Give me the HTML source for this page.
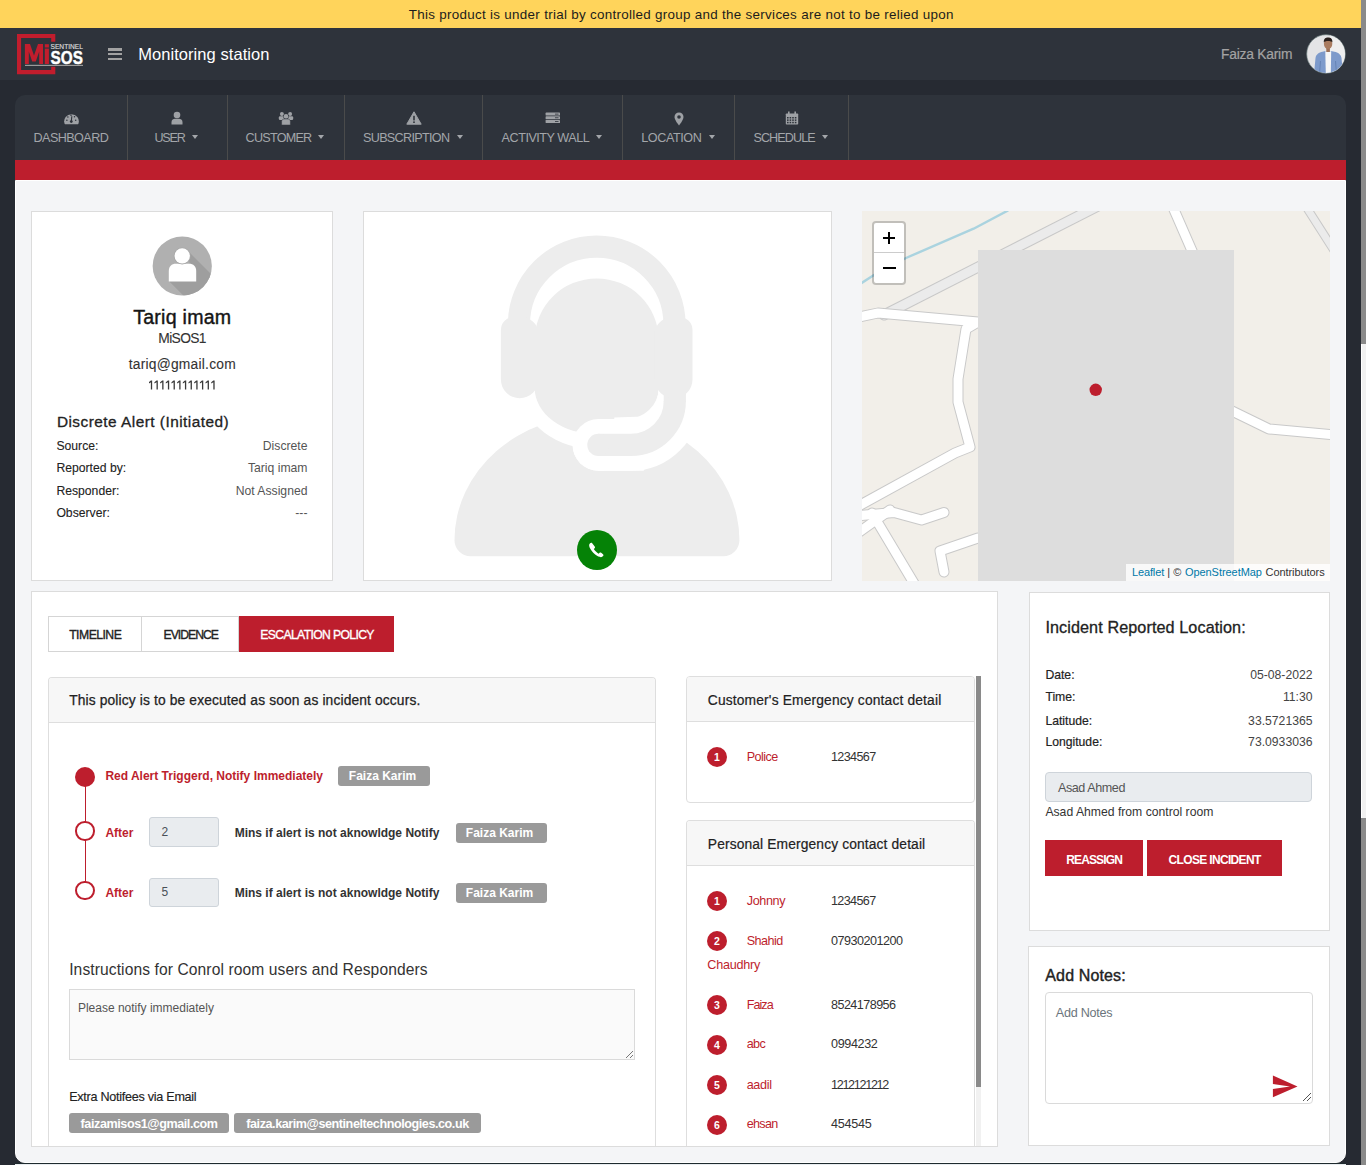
<!DOCTYPE html>
<html><head><meta charset="utf-8"><style>
html,body{margin:0;padding:0;width:1368px;height:1165px;overflow:hidden;background:#262a32;font-family:"Liberation Sans",sans-serif}
body{position:relative}
</style></head><body>
<div style="position:absolute;left:0px;top:0px;width:1368px;height:28px;background:#ffd45b"></div>
<div style="position:absolute;left:0px;top:28px;width:1361px;height:52px;background:#2e333b"></div>
<div style="position:absolute;left:0px;top:80px;width:1361px;height:1085px;background:#262a32"></div>
<div style="position:absolute;left:15px;top:1163px;width:1331px;height:1px;background:#1e2a2e"></div>
<div style="position:absolute;left:1361px;top:0px;width:7px;height:1165px;background:#fff"></div>
<div style="position:absolute;left:1361px;top:0px;width:5px;height:344px;background:#8a8a8a"></div>
<div style="position:absolute;left:1362px;top:344px;width:4px;height:474px;background:#f1f1f1"></div>
<div style="position:absolute;left:1361px;top:818px;width:5px;height:347px;background:#8a8a8a"></div>
<svg style="position:absolute;left:0;top:0" width="100" height="80">
<path d="M55.3 41.7V34H17v40.2h38.3v-7.4h-4.1v3.3H21.1V38.1h30.1v3.6z" fill="#c21d2d"/>
<path d="M24.9 64 V44 H30 L34 55.5 L38 44 H43 V64 H39.2 V51.5 L35.8 61.5 H32.2 L28.8 51.5 V64 Z" fill="#c21d2d"/>
<rect x="44.8" y="48.6" width="4.1" height="15.4" fill="#c21d2d"/><rect x="44.8" y="44.2" width="4.1" height="3.3" fill="#c21d2d"/>
<text x="50.6" y="64" font-family="Liberation Sans" font-weight="700" font-size="19" fill="#fff" stroke="#fff" stroke-width="0.4" textLength="32.3" lengthAdjust="spacingAndGlyphs">SOS</text>
<text x="50.5" y="49.2" font-family="Liberation Sans" font-weight="400" font-size="6.9" fill="#dcdcdc" stroke="#dcdcdc" stroke-width="0.15" textLength="32.5" lengthAdjust="spacingAndGlyphs">SENTINEL</text>
<rect x="25" y="64.8" width="58" height="1.2" fill="#9a9a9a"/>
</svg>
<div style="position:absolute;left:107.5px;top:48px;width:14.5px;height:2.6px;background:#a2a2a2"></div>
<div style="position:absolute;left:107.5px;top:52.8px;width:14.5px;height:2.6px;background:#a2a2a2"></div>
<div style="position:absolute;left:107.5px;top:57.5px;width:14.5px;height:2.6px;background:#a2a2a2"></div>
<svg style="position:absolute;left:1306px;top:34px" width="40" height="40" viewBox="0 0 40 40">
<defs><clipPath id="av"><circle cx="20" cy="20" r="19"/></clipPath></defs>
<circle cx="20" cy="20" r="19.3" fill="#e4e4e6" stroke="#6f7f7f" stroke-width="0.7"/>
<g clip-path="url(#av)">
<rect x="24" y="0" width="16" height="40" fill="#eeeeef"/>
<path d="M8 40 L9.5 24 C10 20.5 13 18.5 16.5 17.8 L19.5 17 L25 17 L28.5 17.8 C32 18.5 35 20.5 35.5 24 L37 40Z" fill="#7d9acb"/>
<path d="M19.3 17.2 L25.2 17.2 L24.8 40 L19.8 40Z" fill="#f6f6f6"/>
<rect x="20.3" y="12.5" width="3.6" height="5.5" fill="#9c7058"/>
<ellipse cx="22.1" cy="9.8" rx="4.2" ry="5.3" fill="#a97b60"/>
<path d="M17.8 8.6 C17.6 4.6 19.6 3.6 22.1 3.6 C24.6 3.6 26.6 4.6 26.4 8.6 C25.6 6.6 18.6 6.6 17.8 8.6Z" fill="#2a201d"/>
<path d="M13.5 40 L14.5 27 M30.5 40 L29.5 27" stroke="#5f7db0" stroke-width="0.8"/>
</g></svg>
<div style="position:absolute;left:15px;top:95px;width:1331px;height:65px;background:#2e333b;border-radius:10px 10px 0 0"></div>
<div style="position:absolute;left:127px;top:95px;width:1px;height:65px;background:#4a4b4b"></div>
<div style="position:absolute;left:227px;top:95px;width:1px;height:65px;background:#4a4b4b"></div>
<div style="position:absolute;left:344px;top:95px;width:1px;height:65px;background:#4a4b4b"></div>
<div style="position:absolute;left:482px;top:95px;width:1px;height:65px;background:#4a4b4b"></div>
<div style="position:absolute;left:622px;top:95px;width:1px;height:65px;background:#4a4b4b"></div>
<div style="position:absolute;left:734px;top:95px;width:1px;height:65px;background:#4a4b4b"></div>
<div style="position:absolute;left:848px;top:95px;width:1px;height:65px;background:#4a4b4b"></div>
<div style="position:absolute;left:15px;top:160px;width:1331px;height:20px;background:#bd1e2d"></div>
<div style="position:absolute;left:192.4px;top:134.5px;width:0;height:0;border-left:3.7px solid transparent;border-right:3.7px solid transparent;border-top:4.2px solid #a3a6aa"></div>
<div style="position:absolute;left:318.1px;top:134.5px;width:0;height:0;border-left:3.7px solid transparent;border-right:3.7px solid transparent;border-top:4.2px solid #a3a6aa"></div>
<div style="position:absolute;left:456.7px;top:134.5px;width:0;height:0;border-left:3.7px solid transparent;border-right:3.7px solid transparent;border-top:4.2px solid #a3a6aa"></div>
<div style="position:absolute;left:596.3px;top:134.5px;width:0;height:0;border-left:3.7px solid transparent;border-right:3.7px solid transparent;border-top:4.2px solid #a3a6aa"></div>
<div style="position:absolute;left:708.7px;top:134.5px;width:0;height:0;border-left:3.7px solid transparent;border-right:3.7px solid transparent;border-top:4.2px solid #a3a6aa"></div>
<div style="position:absolute;left:822.0px;top:134.5px;width:0;height:0;border-left:3.7px solid transparent;border-right:3.7px solid transparent;border-top:4.2px solid #a3a6aa"></div>
<svg style="position:absolute;left:63.5px;top:112px" width="15" height="13" viewBox="0 0 15 13"><path d="M0.5 11.5 A7.3 7.3 0 1 1 14.5 11.5 L14 12.2 H1 Z" fill="#9ea1a5"/><circle cx="7.3" cy="9.6" r="1.4" fill="#2e333b"/><path d="M7.3 9.6 L7.8 4.3" stroke="#2e333b" stroke-width="1.1"/><circle cx="2.9" cy="8.2" r="0.75" fill="#2e333b"/><circle cx="3.9" cy="5" r="0.75" fill="#2e333b"/><circle cx="7" cy="3.3" r="0.75" fill="#2e333b"/><circle cx="10.5" cy="4.8" r="0.75" fill="#2e333b"/><circle cx="11.7" cy="8.2" r="0.75" fill="#2e333b"/></svg>
<svg style="position:absolute;left:168.8px;top:111px" width="16" height="14" viewBox="0 0 16 14"><circle cx="8" cy="4" r="3.3" fill="#9ea1a5"/><path d="M2.5 13.5 V11 C2.5 8.5 4.5 7.8 6 7.8 H10 C11.5 7.8 13.5 8.5 13.5 11 V13.5Z" fill="#9ea1a5"/></svg>
<svg style="position:absolute;left:277.5px;top:111px" width="16" height="14" viewBox="0 0 16 14"><circle cx="3.9" cy="2.9" r="2" fill="#9ea1a5"/><circle cx="12.1" cy="2.9" r="2" fill="#9ea1a5"/><rect x="0.8" y="5.3" width="5.5" height="3.6" rx="1.2" fill="#9ea1a5"/><rect x="9.7" y="5.3" width="5.5" height="3.6" rx="1.2" fill="#9ea1a5"/><circle cx="8" cy="5.4" r="2.7" fill="#2e333b"/><circle cx="8" cy="5.4" r="2.3" fill="#9ea1a5"/><path d="M3.6 14 V10.6 C3.6 8.9 4.8 8 6.3 8 H9.7 C11.2 8 12.4 8.9 12.4 10.6 V14Z" fill="#9ea1a5" stroke="#2e333b" stroke-width="0.5"/></svg>
<svg style="position:absolute;left:406.0px;top:111px" width="16" height="14" viewBox="0 0 16 14"><path d="M8 0.8 L15.2 13.2 H0.8Z" fill="#9ea1a5" stroke="#9ea1a5" stroke-linejoin="round" stroke-width="1"/><rect x="7.2" y="4.8" width="1.6" height="4.6" fill="#2e333b"/><rect x="7.2" y="10.4" width="1.6" height="1.6" fill="#2e333b"/></svg>
<svg style="position:absolute;left:545.2px;top:111px" width="16" height="14" viewBox="0 0 16 14"><rect x="0.6" y="1.6" width="14.4" height="3" rx="0.6" fill="#9ea1a5"/><rect x="0.6" y="5.3" width="14.4" height="3" rx="0.6" fill="#9ea1a5"/><rect x="0.6" y="9" width="14.4" height="3" rx="0.6" fill="#9ea1a5"/><rect x="10" y="2.7" width="3.5" height="0.8" fill="#2e333b"/><rect x="10" y="6.4" width="3.5" height="0.8" fill="#2e333b"/><rect x="10" y="10.1" width="3.5" height="0.8" fill="#2e333b"/></svg>
<svg style="position:absolute;left:673.9px;top:112px" width="10" height="14" viewBox="0 0 10 14"><path d="M5 0.5 C2.3 0.5 0.5 2.5 0.5 5 C0.5 8 5 13.5 5 13.5 C5 13.5 9.5 8 9.5 5 C9.5 2.5 7.7 0.5 5 0.5Z" fill="#9ea1a5"/><circle cx="5" cy="5" r="1.8" fill="#2e333b"/></svg>
<svg style="position:absolute;left:784.6px;top:111px" width="14" height="14" viewBox="0 0 14 14"><rect x="0.8" y="2.5" width="12.4" height="11" rx="0.8" fill="#9ea1a5"/><rect x="3" y="0.5" width="1.6" height="3" fill="#9ea1a5"/><rect x="9.4" y="0.5" width="1.6" height="3" fill="#9ea1a5"/><rect x="2.0" y="6.0" width="1.6" height="1.5" fill="#2e333b"/><rect x="2.0" y="8.4" width="1.6" height="1.5" fill="#2e333b"/><rect x="2.0" y="10.8" width="1.6" height="1.5" fill="#2e333b"/><rect x="4.6" y="6.0" width="1.6" height="1.5" fill="#2e333b"/><rect x="4.6" y="8.4" width="1.6" height="1.5" fill="#2e333b"/><rect x="4.6" y="10.8" width="1.6" height="1.5" fill="#2e333b"/><rect x="7.2" y="6.0" width="1.6" height="1.5" fill="#2e333b"/><rect x="7.2" y="8.4" width="1.6" height="1.5" fill="#2e333b"/><rect x="7.2" y="10.8" width="1.6" height="1.5" fill="#2e333b"/><rect x="9.8" y="6.0" width="1.6" height="1.5" fill="#2e333b"/><rect x="9.8" y="8.4" width="1.6" height="1.5" fill="#2e333b"/><rect x="9.8" y="10.8" width="1.6" height="1.5" fill="#2e333b"/></svg>
<div style="position:absolute;left:15px;top:180px;width:1331px;height:983px;background:#f4f5f7;border-left:1px solid #fff;border-top:1px solid #fff;border-right:1px solid #fff;border-bottom:1px solid #fff;box-sizing:border-box;border-radius:0 0 10px 10px"></div>
<div style="position:absolute;left:15px;top:1164px;width:1331px;height:1px;background:#e9edf0"></div>
<div style="position:absolute;left:31px;top:211px;width:302px;height:370px;background:#fff;border:1px solid #dcdcdc;box-sizing:border-box"></div>
<svg style="position:absolute;left:152px;top:236px" width="60" height="60" viewBox="0 0 60 60">
<defs><clipPath id="pc"><circle cx="30.25" cy="30" r="29.6"/></clipPath></defs>
<circle cx="30.25" cy="30" r="29.6" fill="#b0b0b0"/>
<g clip-path="url(#pc)"><path d="M35.6 14.6 L80 59 L57.5 85.6 L17.3 45.4 L38 30Z" fill="#9e9e9e"/></g>
<path d="M16.8 45.6 V35 C16.8 30.5 19.5 27.8 24 27.8 H37 C41.5 27.8 44.2 30.5 44.2 35 V45.6Z" fill="#fff"/>
<circle cx="30.2" cy="19.9" r="8.5" fill="#a8a8a8"/>
<circle cx="30.2" cy="19.9" r="7.66" fill="#fff"/>
</svg>
<svg style="position:absolute;left:149px;top:380px" width="67" height="10"><path d="M1.85 9.6 V0.6 H3.15 V9.6Z M1.85 0.6 L-0.25 2.3 V3.6 L1.85 2.2Z" fill="#3a3a3a"/><path d="M7.53 9.6 V0.6 H8.83 V9.6Z M7.53 0.6 L5.43 2.3 V3.6 L7.53 2.2Z" fill="#3a3a3a"/><path d="M13.21 9.6 V0.6 H14.51 V9.6Z M13.21 0.6 L11.11 2.3 V3.6 L13.21 2.2Z" fill="#3a3a3a"/><path d="M18.89 9.6 V0.6 H20.19 V9.6Z M18.89 0.6 L16.79 2.3 V3.6 L18.89 2.2Z" fill="#3a3a3a"/><path d="M24.57 9.6 V0.6 H25.87 V9.6Z M24.57 0.6 L22.47 2.3 V3.6 L24.57 2.2Z" fill="#3a3a3a"/><path d="M30.25 9.6 V0.6 H31.55 V9.6Z M30.25 0.6 L28.15 2.3 V3.6 L30.25 2.2Z" fill="#3a3a3a"/><path d="M35.93 9.6 V0.6 H37.23 V9.6Z M35.93 0.6 L33.83 2.3 V3.6 L35.93 2.2Z" fill="#3a3a3a"/><path d="M41.61 9.6 V0.6 H42.91 V9.6Z M41.61 0.6 L39.51 2.3 V3.6 L41.61 2.2Z" fill="#3a3a3a"/><path d="M47.29 9.6 V0.6 H48.59 V9.6Z M47.29 0.6 L45.19 2.3 V3.6 L47.29 2.2Z" fill="#3a3a3a"/><path d="M52.97 9.6 V0.6 H54.27 V9.6Z M52.97 0.6 L50.87 2.3 V3.6 L52.97 2.2Z" fill="#3a3a3a"/><path d="M58.65 9.6 V0.6 H59.95 V9.6Z M58.65 0.6 L56.55 2.3 V3.6 L58.65 2.2Z" fill="#3a3a3a"/><path d="M64.33 9.6 V0.6 H65.63 V9.6Z M64.33 0.6 L62.23 2.3 V3.6 L64.33 2.2Z" fill="#3a3a3a"/></svg>
<div style="position:absolute;left:363px;top:211px;width:469px;height:370px;background:#fff;border:1px solid #dcdcdc;box-sizing:border-box"></div>
<svg style="position:absolute;left:0;top:0;pointer-events:none" width="1368" height="600">
<path d="M454.5 540 A142.45 125.4 0 0 1 739.4 540 V540.2 A16 16 0 0 1 723.4 556.2 H470.5 A16 16 0 0 1 454.5 540.2Z" fill="#ededed"/>
<path d="M534.7 340 A62 61.6 0 0 1 658.7 340 V388 A62 46.4 0 0 1 534.7 388 Z" fill="#fff" stroke="#fff" stroke-width="29"/>
<path d="M674.8 401 A43.9 43.9 0 0 1 630.9 444.9 H598.4" fill="none" stroke="#fff" stroke-width="51.6"/><circle cx="598.4" cy="444.9" r="25.8" fill="#fff"/>
<path d="M534.7 340 A62 61.6 0 0 1 658.7 340 V388 A62 46.4 0 0 1 534.7 388 Z" fill="#ededed"/>
<path d="M658.7 386 V388 A33 31.1 0 0 1 625.7 419.1 L 700 419.1 L 700 386 Z" fill="#fff"/>
<path d="M640.1 416.6 A43.9 43.9 0 0 1 630.9 444.9 H598.4" fill="none" stroke="#fff" stroke-width="51.6"/><circle cx="598.4" cy="444.9" r="25.8" fill="#fff"/>
<path d="M674.8 401 A43.9 43.9 0 0 1 630.9 444.9 H598.4" fill="none" stroke="#ededed" stroke-width="22.2"/><circle cx="598.4" cy="444.9" r="11.1" fill="#ededed"/>
<path d="M674.8 380 V402" fill="none" stroke="#ededed" stroke-width="22.2"/>
<path d="M518.9 324.4 A77.8 77.8 0 0 1 674.5 324.4" fill="none" stroke="#ededed" stroke-width="22.2"/>
<path d="M500.9 330 A13 13 0 0 1 513.9 317 H521 A18 18 0 0 1 538.5 331 V379.5 A18 18 0 0 1 500.9 379.5 Z" fill="#ededed"/>
<path d="M692.5 330 A13 13 0 0 0 679.5 317 H672.4 A18 18 0 0 0 654.9 331 V379.5 A18 18 0 0 0 692.5 379.5 Z" fill="#ededed"/>
</svg>
<svg style="position:absolute;left:577px;top:530px" width="40" height="40" viewBox="0 0 40 40">
<circle cx="20" cy="20" r="20" fill="#058206"/>
<path d="M15.2 13.2 C14.6 12.6 13.6 12.7 13.1 13.3 L12.5 14 C11.9 14.8 12 16.5 13.3 18.8 C14.8 21.4 17.3 24.3 20.4 26 C22.8 27.3 24.3 27.5 25.2 26.8 L26 26.1 C26.6 25.6 26.6 24.7 26 24.2 L24.2 22.8 C23.6 22.4 22.9 22.5 22.4 23 L21.6 23.8 C20 23 17.6 20.6 16.8 19.1 L17.6 18.3 C18.1 17.8 18.1 17 17.7 16.4Z" fill="#fff"/>
</svg>
<div style="position:absolute;left:862px;top:211px;width:468px;height:370px;overflow:hidden;background:#f2efe9">
<svg style="position:absolute;left:0;top:0" width="468" height="370" viewBox="862 211 468 370">
<g fill="none" stroke-linejoin="round" stroke-linecap="round">
<path d="M884 315 L1100 205" stroke="#c8c8c8" stroke-width="11"/>
<path d="M884 315 L1100 205" stroke="#ebebeb" stroke-width="9"/>
<path d="M1305 205 L1335 252" stroke="#c8c8c8" stroke-width="9"/>
<path d="M1305 205 L1335 252" stroke="#ebebeb" stroke-width="7"/>
<path d="M860 284 L874 275 L906 258 L973.6 228.7 L1007.6 210.7" stroke="#aad3df" stroke-width="2.4"/>
<g stroke="#c9c9c9" stroke-width="11">
<path d="M855 318 L878 313 L978 322 L966 329 L958 379 L958 402 L970 447 L955 453 L855 508"/>
<path d="M855 516 L894 512.5 L921.5 520 L944 512.5"/>
<path d="M855 535 L890 510"/>
<path d="M872 513 L918 590"/>
<path d="M944 572 L940 551 L978 538"/>
<path d="M1172 205 L1196 260"/>
<path d="M1230 410 L1269 429 L1335 435"/>
</g>
<g stroke="#ffffff" stroke-width="9">
<path d="M855 318 L878 313 L978 322 L966 329 L958 379 L958 402 L970 447 L955 453 L855 508"/>
<path d="M855 516 L894 512.5 L921.5 520 L944 512.5"/>
<path d="M855 535 L890 510"/>
<path d="M872 513 L918 590"/>
<path d="M944 572 L940 551 L978 538"/>
<path d="M1172 205 L1196 260"/>
<path d="M1230 410 L1269 429 L1335 435"/>
</g></g>
<rect x="978" y="250" width="256" height="340" fill="#dddddd"/>
<circle cx="1095.7" cy="389.8" r="6.2" fill="#bd1e2d"/>
</svg>
<div style="position:absolute;left:10px;top:10px;width:30px;height:60px;border:2px solid rgba(0,0,0,0.2);border-radius:4px;background:#fff;background-clip:padding-box"></div>
<div style="position:absolute;left:12px;top:40.6px;width:30px;height:1px;background:#ccc"></div>
<div style="position:absolute;left:864px;top:563px"></div>
<div style="position:absolute;left:264px;top:352.5px;width:204px;height:18px;background:rgba(255,255,255,0.8)"></div>
</div>
<div style="position:absolute;left:882.6px;top:237px;width:12.4px;height:2.3px;background:#000"></div>
<div style="position:absolute;left:887.7px;top:232px;width:2.2px;height:12.2px;background:#000"></div>
<div style="position:absolute;left:883.3px;top:266.8px;width:12.5px;height:2.4px;background:#000"></div>
<div style="position:absolute;left:31px;top:591px;width:967px;height:556px;background:#fff;border:1px solid #dcdcdc;box-sizing:border-box;overflow:hidden"></div>
<div style="position:absolute;left:48px;top:616px;width:94px;height:36px;border:1px solid #d5d5d5;box-sizing:border-box;background:#fff"></div>
<div style="position:absolute;left:141px;top:616px;width:98px;height:36px;border:1px solid #d5d5d5;box-sizing:border-box;background:#fff"></div>
<div style="position:absolute;left:238.6px;top:616px;width:155.4px;height:36px;background:#bd1e2d"></div>
<div style="position:absolute;left:48px;top:677px;width:608px;height:469px;border:1px solid #dedede;border-bottom:none;border-radius:4px 4px 0 0;box-sizing:border-box;background:#fff"></div>
<div style="position:absolute;left:49px;top:678px;width:606px;height:45px;background:#f7f7f7;border-bottom:1px solid #dedede;border-radius:3px 3px 0 0;box-sizing:border-box"></div>
<div style="position:absolute;left:84.6px;top:786px;width:1.2px;height:105px;background:#bd1e2d"></div>
<div style="position:absolute;left:75px;top:767px;width:20px;height:20px;border-radius:50%;background:#bd1e2d"></div>
<div style="position:absolute;left:75.3px;top:821.3px;width:19.4px;height:19.4px;border-radius:50%;background:#fff;border:2px solid #bd1e2d;box-sizing:border-box"></div>
<div style="position:absolute;left:75.3px;top:881.0999999999999px;width:19.4px;height:19.4px;border-radius:50%;background:#fff;border:2px solid #bd1e2d;box-sizing:border-box"></div>
<div style="position:absolute;left:338.4px;top:766.1px;width:91.6px;height:19.8px;background:#9a9a9a;border-radius:3px"></div>
<div style="position:absolute;left:148.8px;top:817.2px;width:70px;height:29.5px;background:#e9ecef;border:1px solid #ced4da;border-radius:3px;box-sizing:border-box"></div>
<div style="position:absolute;left:455.7px;top:823.0px;width:91.2px;height:19.8px;background:#9a9a9a;border-radius:3px"></div>
<div style="position:absolute;left:148.8px;top:877.6px;width:70px;height:29.5px;background:#e9ecef;border:1px solid #ced4da;border-radius:3px;box-sizing:border-box"></div>
<div style="position:absolute;left:455.7px;top:883.4px;width:91.2px;height:19.8px;background:#9a9a9a;border-radius:3px"></div>
<div style="position:absolute;left:69.2px;top:989.3px;width:566px;height:71px;background:#fafafa;border:1px solid #dadada;box-sizing:border-box"></div>
<svg style="position:absolute;left:624px;top:1049px" width="10" height="10"><path d="M9 2 L2 9 M9 6 L6 9" stroke="#777" stroke-width="1"/></svg>
<div style="position:absolute;left:69.2px;top:1113.3px;width:159.8px;height:19.3px;background:#9a9a9a;border-radius:3px"></div>
<div style="position:absolute;left:234.3px;top:1113.3px;width:246.4px;height:19.3px;background:#9a9a9a;border-radius:3px"></div>
<div style="position:absolute;left:686.4px;top:676.4px;width:289px;height:127px;border:1px solid #dedede;border-radius:4px;box-sizing:border-box;background:#fff"></div>
<div style="position:absolute;left:687.4px;top:677.4px;width:287px;height:45px;background:#f7f7f7;border-bottom:1px solid #dedede;border-radius:3px 3px 0 0;box-sizing:border-box"></div>
<div style="position:absolute;left:686.4px;top:820.3px;width:289px;height:325.7px;border:1px solid #dedede;border-bottom:none;border-radius:4px 4px 0 0;box-sizing:border-box;background:#fff"></div>
<div style="position:absolute;left:687.4px;top:821.3px;width:287px;height:45px;background:#f7f7f7;border-bottom:1px solid #dedede;border-radius:3px 3px 0 0;box-sizing:border-box"></div>
<div style="position:absolute;left:976px;top:676.4px;width:5px;height:469.6px;background:#f1f1f1"></div>
<div style="position:absolute;left:976px;top:676.4px;width:5px;height:411px;background:#8a8a8a"></div>
<div style="position:absolute;left:707px;top:746.9px;width:20px;height:20px;border-radius:50%;background:#bd1e2d"></div>
<div style="position:absolute;left:707px;top:891.1px;width:20px;height:20px;border-radius:50%;background:#bd1e2d"></div>
<div style="position:absolute;left:707px;top:930.9px;width:20px;height:20px;border-radius:50%;background:#bd1e2d"></div>
<div style="position:absolute;left:707px;top:995px;width:20px;height:20px;border-radius:50%;background:#bd1e2d"></div>
<div style="position:absolute;left:707px;top:1034.8px;width:20px;height:20px;border-radius:50%;background:#bd1e2d"></div>
<div style="position:absolute;left:707px;top:1075px;width:20px;height:20px;border-radius:50%;background:#bd1e2d"></div>
<div style="position:absolute;left:707px;top:1114.8px;width:20px;height:20px;border-radius:50%;background:#bd1e2d"></div>
<div style="position:absolute;left:1028.5px;top:591.5px;width:301.5px;height:339px;background:#fff;border:1px solid #dcdcdc;box-sizing:border-box"></div>
<div style="position:absolute;left:1045.4px;top:772.3px;width:267.1px;height:29.5px;background:#e9ecef;border:1px solid #ced4da;border-radius:4px;box-sizing:border-box"></div>
<div style="position:absolute;left:1045.4px;top:839.9px;width:97.4px;height:36.1px;background:#bd1e2d"></div>
<div style="position:absolute;left:1147.3px;top:839.9px;width:134.6px;height:36.1px;background:#bd1e2d"></div>
<div style="position:absolute;left:1028.3px;top:946.2px;width:301.5px;height:199.7px;background:#fff;border:1px solid #dcdcdc;box-sizing:border-box"></div>
<div style="position:absolute;left:1045.3px;top:992.3px;width:267.7px;height:112.2px;background:#fff;border:1px solid #dadada;border-radius:4px;box-sizing:border-box"></div>
<svg style="position:absolute;left:1272px;top:1075px" width="27" height="23"><path d="M0.9 0.5 L25.5 11.4 L0.9 22.2 V14.1 L18 11.4 L0.9 8.9Z" fill="#bd1e2d"/></svg>
<svg style="position:absolute;left:1302px;top:1092px" width="10" height="10"><path d="M9 1 L1 9 M9 5 L5 9" stroke="#555" stroke-width="1"/></svg>
<span id="t0" style="position:absolute;white-space:nowrap;font-family:'Liberation Sans';font-size:13.4px;font-weight:400;color:#1c1c1c;line-height:13.4px;letter-spacing:0.299px;left:408.8px;top:8.26px;">This product is under trial by controlled group and the services are not to be relied upon</span>
<span id="t1" style="position:absolute;white-space:nowrap;font-family:'Liberation Sans';font-size:16.5px;font-weight:400;color:#ffffff;line-height:16.5px;letter-spacing:0.058px;left:138.2px;top:46.03px;">Monitoring station</span>
<span id="t2" style="position:absolute;white-space:nowrap;font-family:'Liberation Sans';font-size:13.8px;font-weight:400;color:#a3a3a3;line-height:13.8px;letter-spacing:-0.219px;left:1292.2px;top:47.62px;transform:translateX(-100%);-webkit-text-stroke:0.2px #a3a3a3;">Faiza Karim</span>
<span id="t3" style="position:absolute;white-space:nowrap;font-family:'Liberation Sans';font-size:12.6px;font-weight:400;color:#a3a6aa;line-height:12.6px;letter-spacing:-0.576px;left:33.6px;top:131.73px;">DASHBOARD</span>
<span id="t4" style="position:absolute;white-space:nowrap;font-family:'Liberation Sans';font-size:12.6px;font-weight:400;color:#a3a6aa;line-height:12.6px;letter-spacing:-1.150px;left:154.4px;top:131.73px;">USER</span>
<span id="t5" style="position:absolute;white-space:nowrap;font-family:'Liberation Sans';font-size:12.6px;font-weight:400;color:#a3a6aa;line-height:12.6px;letter-spacing:-0.755px;left:245.6px;top:131.73px;">CUSTOMER</span>
<span id="t6" style="position:absolute;white-space:nowrap;font-family:'Liberation Sans';font-size:12.6px;font-weight:400;color:#a3a6aa;line-height:12.6px;letter-spacing:-0.681px;left:363.0px;top:131.73px;">SUBSCRIPTION</span>
<span id="t7" style="position:absolute;white-space:nowrap;font-family:'Liberation Sans';font-size:12.6px;font-weight:400;color:#a3a6aa;line-height:12.6px;letter-spacing:-0.468px;left:501.6px;top:131.73px;">ACTIVITY WALL</span>
<span id="t8" style="position:absolute;white-space:nowrap;font-family:'Liberation Sans';font-size:12.6px;font-weight:400;color:#a3a6aa;line-height:12.6px;letter-spacing:-0.394px;left:641.2px;top:131.73px;">LOCATION</span>
<span id="t9" style="position:absolute;white-space:nowrap;font-family:'Liberation Sans';font-size:12.6px;font-weight:400;color:#a3a6aa;line-height:12.6px;letter-spacing:-0.899px;left:753.4px;top:131.73px;">SCHEDULE</span>
<span id="t10" style="position:absolute;white-space:nowrap;font-family:'Liberation Sans';font-size:19.6px;font-weight:400;color:#151515;line-height:19.6px;letter-spacing:0.249px;left:182.3px;top:308.01px;transform:translateX(-50%);-webkit-text-stroke:0.4px #151515;">Tariq imam</span>
<span id="t11" style="position:absolute;white-space:nowrap;font-family:'Liberation Sans';font-size:13.8px;font-weight:400;color:#333;line-height:13.8px;letter-spacing:-0.646px;left:182.1px;top:332.32px;transform:translateX(-50%);-webkit-text-stroke:0.1px #333;">MiSOS1</span>
<span id="t12" style="position:absolute;white-space:nowrap;font-family:'Liberation Sans';font-size:13.8px;font-weight:400;color:#333;line-height:13.8px;letter-spacing:0.239px;left:182.3px;top:357.52px;transform:translateX(-50%);-webkit-text-stroke:0.1px #333;">tariq@gmail.com</span>
<span id="t13" style="position:absolute;white-space:nowrap;font-family:'Liberation Sans';font-size:15.4px;font-weight:400;color:#222;line-height:15.4px;letter-spacing:0.475px;left:56.9px;top:413.66px;-webkit-text-stroke:0.3px #222;">Discrete Alert (Initiated)</span>
<span id="t14" style="position:absolute;white-space:nowrap;font-family:'Liberation Sans';font-size:12.2px;font-weight:400;color:#222;line-height:12.2px;left:56.4px;top:439.67px;-webkit-text-stroke:0.1px #222;">Source:</span>
<span id="t15" style="position:absolute;white-space:nowrap;font-family:'Liberation Sans';font-size:12.2px;font-weight:400;color:#555;line-height:12.2px;left:307.5px;top:439.67px;transform:translateX(-100%);">Discrete</span>
<span id="t16" style="position:absolute;white-space:nowrap;font-family:'Liberation Sans';font-size:12.2px;font-weight:400;color:#222;line-height:12.2px;left:56.4px;top:461.77px;-webkit-text-stroke:0.1px #222;">Reported by:</span>
<span id="t17" style="position:absolute;white-space:nowrap;font-family:'Liberation Sans';font-size:12.2px;font-weight:400;color:#555;line-height:12.2px;left:307.5px;top:461.77px;transform:translateX(-100%);">Tariq imam</span>
<span id="t18" style="position:absolute;white-space:nowrap;font-family:'Liberation Sans';font-size:12.2px;font-weight:400;color:#222;line-height:12.2px;left:56.4px;top:485.27px;-webkit-text-stroke:0.1px #222;">Responder:</span>
<span id="t19" style="position:absolute;white-space:nowrap;font-family:'Liberation Sans';font-size:12.2px;font-weight:400;color:#555;line-height:12.2px;left:307.5px;top:485.27px;transform:translateX(-100%);">Not Assigned</span>
<span id="t20" style="position:absolute;white-space:nowrap;font-family:'Liberation Sans';font-size:12.2px;font-weight:400;color:#222;line-height:12.2px;left:56.4px;top:507.37px;-webkit-text-stroke:0.1px #222;">Observer:</span>
<span id="t21" style="position:absolute;white-space:nowrap;font-family:'Liberation Sans';font-size:12.2px;font-weight:400;color:#555;line-height:12.2px;left:307.5px;top:507.37px;transform:translateX(-100%);">---</span>
<span id="t22" style="position:absolute;white-space:nowrap;font-family:'Liberation Sans';font-size:11px;font-weight:400;color:#0078a8;line-height:11px;letter-spacing:-0.119px;left:1131.9px;top:566.79px;">Leaflet</span>
<span id="t23" style="position:absolute;white-space:nowrap;font-family:'Liberation Sans';font-size:11px;font-weight:400;color:#333;line-height:11px;left:1167.3px;top:566.79px;">|</span>
<span id="t24" style="position:absolute;white-space:nowrap;font-family:'Liberation Sans';font-size:11px;font-weight:400;color:#333;line-height:11px;left:1173.2px;top:566.79px;">©</span>
<span id="t25" style="position:absolute;white-space:nowrap;font-family:'Liberation Sans';font-size:11px;font-weight:400;color:#0078a8;line-height:11px;letter-spacing:-0.050px;left:1184.9px;top:566.79px;">OpenStreetMap</span>
<span id="t26" style="position:absolute;white-space:nowrap;font-family:'Liberation Sans';font-size:11px;font-weight:400;color:#333;line-height:11px;letter-spacing:-0.068px;left:1265.5px;top:566.79px;">Contributors</span>
<span id="t27" style="position:absolute;white-space:nowrap;font-family:'Liberation Sans';font-size:12.2px;font-weight:400;color:#222;line-height:12.2px;letter-spacing:-0.515px;left:69.2px;top:628.67px;-webkit-text-stroke:0.35px #222;">TIMELINE</span>
<span id="t28" style="position:absolute;white-space:nowrap;font-family:'Liberation Sans';font-size:12.2px;font-weight:400;color:#222;line-height:12.2px;letter-spacing:-0.977px;left:163.5px;top:628.67px;-webkit-text-stroke:0.35px #222;">EVIDENCE</span>
<span id="t29" style="position:absolute;white-space:nowrap;font-family:'Liberation Sans';font-size:12.2px;font-weight:400;color:#fff;line-height:12.2px;letter-spacing:-0.642px;left:260.3px;top:628.67px;-webkit-text-stroke:0.35px #fff;">ESCALATION POLICY</span>
<span id="t30" style="position:absolute;white-space:nowrap;font-family:'Liberation Sans';font-size:13.8px;font-weight:400;color:#222;line-height:13.8px;letter-spacing:0.134px;left:69.2px;top:694.12px;-webkit-text-stroke:0.25px #222;">This policy is to be executed as soon as incident occurs.</span>
<span id="t31" style="position:absolute;white-space:nowrap;font-family:'Liberation Sans';font-size:12px;font-weight:700;color:#bd1e2d;line-height:12px;left:105.4px;top:769.74px;">Red Alert Triggerd, Notify Immediately</span>
<span id="t32" style="position:absolute;white-space:nowrap;font-family:'Liberation Sans';font-size:12px;font-weight:700;color:#fff;line-height:12px;left:348.8px;top:770.04px;">Faiza Karim</span>
<span id="t33" style="position:absolute;white-space:nowrap;font-family:'Liberation Sans';font-size:12px;font-weight:700;color:#bd1e2d;line-height:12px;left:105.4px;top:826.54px;">After</span>
<span id="t34" style="position:absolute;white-space:nowrap;font-family:'Liberation Sans';font-size:12px;font-weight:400;color:#495057;line-height:12px;left:161.5px;top:825.54px;">2</span>
<span id="t35" style="position:absolute;white-space:nowrap;font-family:'Liberation Sans';font-size:12px;font-weight:700;color:#333;line-height:12px;left:234.7px;top:826.54px;">Mins if alert is not aknowldge Notify</span>
<span id="t36" style="position:absolute;white-space:nowrap;font-family:'Liberation Sans';font-size:12px;font-weight:700;color:#fff;line-height:12px;left:465.8px;top:826.54px;">Faiza Karim</span>
<span id="t37" style="position:absolute;white-space:nowrap;font-family:'Liberation Sans';font-size:12px;font-weight:700;color:#bd1e2d;line-height:12px;left:105.4px;top:886.94px;">After</span>
<span id="t38" style="position:absolute;white-space:nowrap;font-family:'Liberation Sans';font-size:12px;font-weight:400;color:#495057;line-height:12px;left:161.5px;top:885.94px;">5</span>
<span id="t39" style="position:absolute;white-space:nowrap;font-family:'Liberation Sans';font-size:12px;font-weight:700;color:#333;line-height:12px;left:234.7px;top:886.94px;">Mins if alert is not aknowldge Notify</span>
<span id="t40" style="position:absolute;white-space:nowrap;font-family:'Liberation Sans';font-size:12px;font-weight:700;color:#fff;line-height:12px;left:465.8px;top:886.94px;">Faiza Karim</span>
<span id="t41" style="position:absolute;white-space:nowrap;font-family:'Liberation Sans';font-size:15.6px;font-weight:400;color:#333;line-height:15.6px;letter-spacing:0.099px;left:69.2px;top:961.59px;">Instructions for Conrol room users and Responders</span>
<span id="t42" style="position:absolute;white-space:nowrap;font-family:'Liberation Sans';font-size:12px;font-weight:400;color:#555;line-height:12px;letter-spacing:-0.003px;left:77.9px;top:1001.84px;">Please notify immediately</span>
<span id="t43" style="position:absolute;white-space:nowrap;font-family:'Liberation Sans';font-size:12.6px;font-weight:400;color:#222;line-height:12.6px;letter-spacing:-0.270px;left:69.2px;top:1090.63px;-webkit-text-stroke:0.15px #222;">Extra Notifees via Email</span>
<span id="t44" style="position:absolute;white-space:nowrap;font-family:'Liberation Sans';font-size:12.6px;font-weight:700;color:#fff;line-height:12.6px;letter-spacing:-0.427px;left:149.1px;top:1118.33px;transform:translateX(-50%);">faizamisos1@gmail.com</span>
<span id="t45" style="position:absolute;white-space:nowrap;font-family:'Liberation Sans';font-size:12.6px;font-weight:700;color:#fff;line-height:12.6px;letter-spacing:-0.435px;left:357.5px;top:1118.33px;transform:translateX(-50%);">faiza.karim@sentineltechnologies.co.uk</span>
<span id="t46" style="position:absolute;white-space:nowrap;font-family:'Liberation Sans';font-size:13.8px;font-weight:400;color:#222;line-height:13.8px;letter-spacing:0.157px;left:707.8px;top:693.82px;-webkit-text-stroke:0.2px #222;">Customer&#x27;s Emergency contact detail</span>
<span id="t47" style="position:absolute;white-space:nowrap;font-family:'Liberation Sans';font-size:13.8px;font-weight:400;color:#222;line-height:13.8px;letter-spacing:0.130px;left:707.8px;top:837.72px;-webkit-text-stroke:0.2px #222;">Personal Emergency contact detail</span>
<span id="t48" style="position:absolute;white-space:nowrap;font-family:'Liberation Sans';font-size:10.5px;font-weight:700;color:#fff;line-height:10.5px;left:717px;top:752.01px;transform:translateX(-50%);">1</span>
<span id="t49" style="position:absolute;white-space:nowrap;font-family:'Liberation Sans';font-size:12.6px;font-weight:400;color:#bd1e2d;line-height:12.6px;letter-spacing:-0.552px;left:746.7px;top:750.53px;">Police</span>
<span id="t50" style="position:absolute;white-space:nowrap;font-family:'Liberation Sans';font-size:12.6px;font-weight:400;color:#333;line-height:12.6px;letter-spacing:-0.647px;left:831px;top:750.53px;">1234567</span>
<span id="t51" style="position:absolute;white-space:nowrap;font-family:'Liberation Sans';font-size:10.5px;font-weight:700;color:#fff;line-height:10.5px;left:717px;top:896.21px;transform:translateX(-50%);">1</span>
<span id="t52" style="position:absolute;white-space:nowrap;font-family:'Liberation Sans';font-size:12.6px;font-weight:400;color:#bd1e2d;line-height:12.6px;letter-spacing:-0.354px;left:746.7px;top:894.73px;">Johnny</span>
<span id="t53" style="position:absolute;white-space:nowrap;font-family:'Liberation Sans';font-size:12.6px;font-weight:400;color:#333;line-height:12.6px;letter-spacing:-0.647px;left:831px;top:894.73px;">1234567</span>
<span id="t54" style="position:absolute;white-space:nowrap;font-family:'Liberation Sans';font-size:10.5px;font-weight:700;color:#fff;line-height:10.5px;left:717px;top:936.01px;transform:translateX(-50%);">2</span>
<span id="t55" style="position:absolute;white-space:nowrap;font-family:'Liberation Sans';font-size:12.6px;font-weight:400;color:#bd1e2d;line-height:12.6px;letter-spacing:-0.536px;left:746.7px;top:934.53px;">Shahid</span>
<span id="t56" style="position:absolute;white-space:nowrap;font-family:'Liberation Sans';font-size:12.6px;font-weight:400;color:#333;line-height:12.6px;letter-spacing:-0.504px;left:831px;top:934.53px;">07930201200</span>
<span id="t57" style="position:absolute;white-space:nowrap;font-family:'Liberation Sans';font-size:12.6px;font-weight:400;color:#bd1e2d;line-height:12.6px;letter-spacing:-0.239px;left:707.3px;top:959.03px;">Chaudhry</span>
<span id="t58" style="position:absolute;white-space:nowrap;font-family:'Liberation Sans';font-size:10.5px;font-weight:700;color:#fff;line-height:10.5px;left:717px;top:1000.11px;transform:translateX(-50%);">3</span>
<span id="t59" style="position:absolute;white-space:nowrap;font-family:'Liberation Sans';font-size:12.6px;font-weight:400;color:#bd1e2d;line-height:12.6px;letter-spacing:-0.959px;left:746.7px;top:998.63px;">Faiza</span>
<span id="t60" style="position:absolute;white-space:nowrap;font-family:'Liberation Sans';font-size:12.6px;font-weight:400;color:#333;line-height:12.6px;letter-spacing:-0.555px;left:831px;top:998.63px;">8524178956</span>
<span id="t61" style="position:absolute;white-space:nowrap;font-family:'Liberation Sans';font-size:10.5px;font-weight:700;color:#fff;line-height:10.5px;left:717px;top:1039.91px;transform:translateX(-50%);">4</span>
<span id="t62" style="position:absolute;white-space:nowrap;font-family:'Liberation Sans';font-size:12.6px;font-weight:400;color:#bd1e2d;line-height:12.6px;letter-spacing:-0.604px;left:746.7px;top:1038.43px;">abc</span>
<span id="t63" style="position:absolute;white-space:nowrap;font-family:'Liberation Sans';font-size:12.6px;font-weight:400;color:#333;line-height:12.6px;letter-spacing:-0.362px;left:831px;top:1038.43px;">0994232</span>
<span id="t64" style="position:absolute;white-space:nowrap;font-family:'Liberation Sans';font-size:10.5px;font-weight:700;color:#fff;line-height:10.5px;left:717px;top:1080.11px;transform:translateX(-50%);">5</span>
<span id="t65" style="position:absolute;white-space:nowrap;font-family:'Liberation Sans';font-size:12.6px;font-weight:400;color:#bd1e2d;line-height:12.6px;letter-spacing:-0.322px;left:746.7px;top:1078.63px;">aadil</span>
<span id="t66" style="position:absolute;white-space:nowrap;font-family:'Liberation Sans';font-size:12.6px;font-weight:400;color:#333;line-height:12.6px;letter-spacing:-1.305px;left:831px;top:1078.63px;">1212121212</span>
<span id="t67" style="position:absolute;white-space:nowrap;font-family:'Liberation Sans';font-size:10.5px;font-weight:700;color:#fff;line-height:10.5px;left:717px;top:1119.91px;transform:translateX(-50%);">6</span>
<span id="t68" style="position:absolute;white-space:nowrap;font-family:'Liberation Sans';font-size:12.6px;font-weight:400;color:#bd1e2d;line-height:12.6px;letter-spacing:-0.666px;left:746.7px;top:1118.43px;">ehsan</span>
<span id="t69" style="position:absolute;white-space:nowrap;font-family:'Liberation Sans';font-size:12.6px;font-weight:400;color:#333;line-height:12.6px;letter-spacing:-0.255px;left:831px;top:1118.43px;">454545</span>
<span id="t70" style="position:absolute;white-space:nowrap;font-family:'Liberation Sans';font-size:16.2px;font-weight:400;color:#222;line-height:16.2px;letter-spacing:0.089px;left:1045.4px;top:619.09px;-webkit-text-stroke:0.3px #222;">Incident Reported Location:</span>
<span id="t71" style="position:absolute;white-space:nowrap;font-family:'Liberation Sans';font-size:12.2px;font-weight:400;color:#222;line-height:12.2px;left:1045.4px;top:668.87px;-webkit-text-stroke:0.2px #222;">Date:</span>
<span id="t72" style="position:absolute;white-space:nowrap;font-family:'Liberation Sans';font-size:12.2px;font-weight:400;color:#444;line-height:12.2px;left:1312.5px;top:668.87px;transform:translateX(-100%);">05-08-2022</span>
<span id="t73" style="position:absolute;white-space:nowrap;font-family:'Liberation Sans';font-size:12.2px;font-weight:400;color:#222;line-height:12.2px;left:1045.4px;top:690.77px;-webkit-text-stroke:0.2px #222;">Time:</span>
<span id="t74" style="position:absolute;white-space:nowrap;font-family:'Liberation Sans';font-size:12.2px;font-weight:400;color:#444;line-height:12.2px;left:1312.5px;top:690.77px;transform:translateX(-100%);">11:30</span>
<span id="t75" style="position:absolute;white-space:nowrap;font-family:'Liberation Sans';font-size:12.2px;font-weight:400;color:#222;line-height:12.2px;left:1045.4px;top:714.67px;-webkit-text-stroke:0.2px #222;">Latitude:</span>
<span id="t76" style="position:absolute;white-space:nowrap;font-family:'Liberation Sans';font-size:12.2px;font-weight:400;color:#444;line-height:12.2px;left:1312.5px;top:714.67px;transform:translateX(-100%);">33.5721365</span>
<span id="t77" style="position:absolute;white-space:nowrap;font-family:'Liberation Sans';font-size:12.2px;font-weight:400;color:#222;line-height:12.2px;left:1045.4px;top:736.27px;-webkit-text-stroke:0.2px #222;">Longitude:</span>
<span id="t78" style="position:absolute;white-space:nowrap;font-family:'Liberation Sans';font-size:12.2px;font-weight:400;color:#444;line-height:12.2px;left:1312.5px;top:736.27px;transform:translateX(-100%);">73.0933036</span>
<span id="t79" style="position:absolute;white-space:nowrap;font-family:'Liberation Sans';font-size:12.6px;font-weight:400;color:#555;line-height:12.6px;letter-spacing:-0.442px;left:1058px;top:782.13px;">Asad Ahmed</span>
<span id="t80" style="position:absolute;white-space:nowrap;font-family:'Liberation Sans';font-size:12.2px;font-weight:400;color:#333;line-height:12.2px;left:1045.4px;top:805.57px;">Asad Ahmed from control room</span>
<span id="t81" style="position:absolute;white-space:nowrap;font-family:'Liberation Sans';font-size:12px;font-weight:700;color:#fff;line-height:12px;letter-spacing:-0.861px;left:1094.1px;top:853.64px;transform:translateX(-50%);">REASSIGN</span>
<span id="t82" style="position:absolute;white-space:nowrap;font-family:'Liberation Sans';font-size:12px;font-weight:700;color:#fff;line-height:12px;letter-spacing:-0.667px;left:1214.6px;top:853.64px;transform:translateX(-50%);">CLOSE INCIDENT</span>
<span id="t83" style="position:absolute;white-space:nowrap;font-family:'Liberation Sans';font-size:16px;font-weight:400;color:#222;line-height:16px;letter-spacing:0.134px;left:1045.3px;top:967.86px;-webkit-text-stroke:0.4px #222;">Add Notes:</span>
<span id="t84" style="position:absolute;white-space:nowrap;font-family:'Liberation Sans';font-size:12.6px;font-weight:400;color:#6c757d;line-height:12.6px;letter-spacing:-0.257px;left:1055.8px;top:1006.73px;">Add Notes</span>
</body></html>
